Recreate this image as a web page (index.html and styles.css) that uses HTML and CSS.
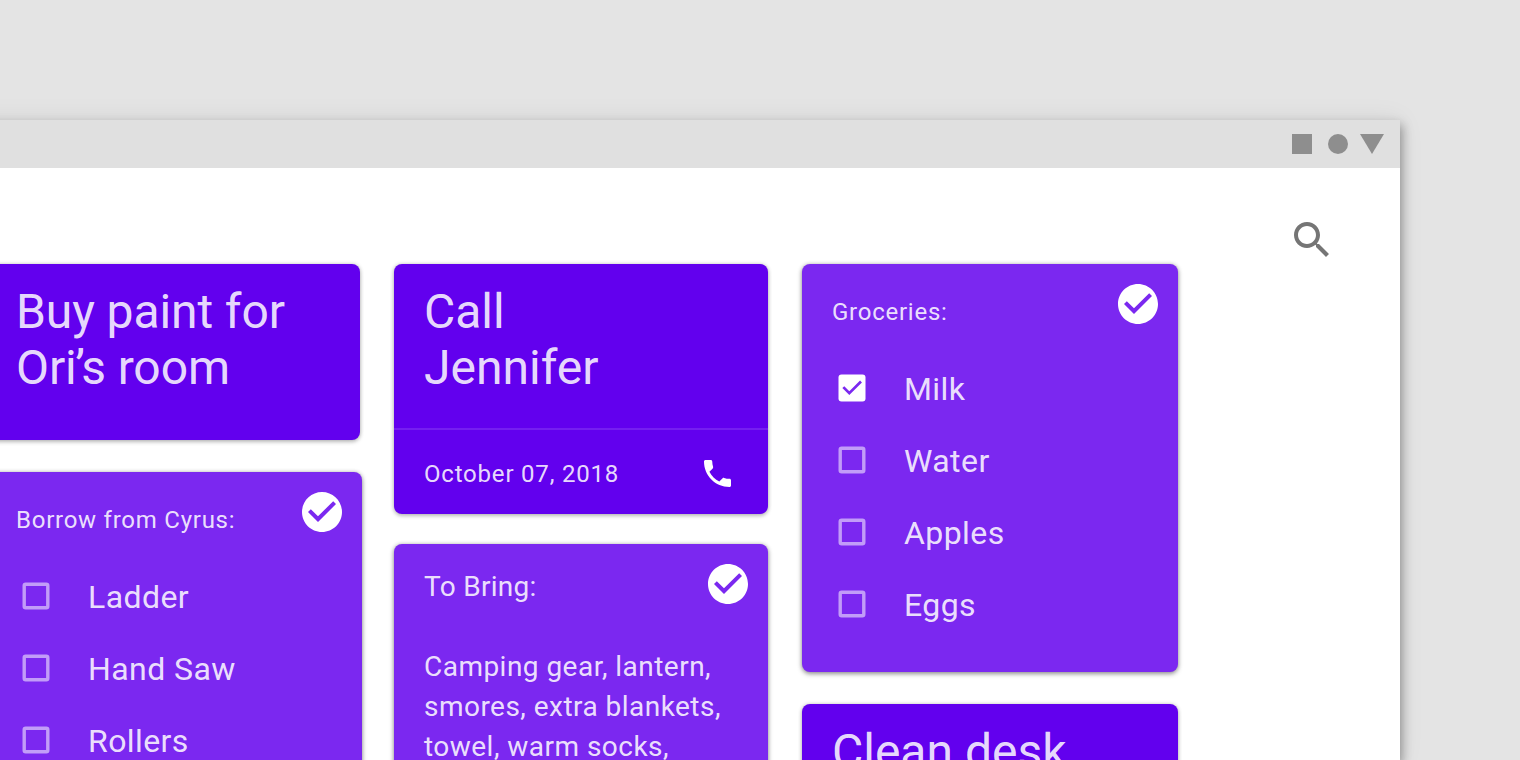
FILE: index.html
```html
<!DOCTYPE html>
<html lang="en">
<head>
<meta charset="utf-8">
<title>Notes</title>
<link rel="stylesheet" href="styles.css">
</head>
<body>
<svg class="symbols" aria-hidden="true">
  <symbol id="check-circle" viewBox="0 0 24 24"><path d="M12 2C6.48 2 2 6.48 2 12s4.48 10 10 10 10-4.480 10-10S17.520 2 12 2zm-2 15l-5-5 1.410-1.410L10 14.170l7.590-7.590L19 8l-9 9z"/></symbol>
  <symbol id="box" viewBox="0 0 36 36"><rect x="6.200" y="6.200" width="23.600" height="23.600" rx="1.500" fill="none" stroke="currentColor" stroke-width="3.400"/></symbol>
  <symbol id="box-checked" viewBox="0 0 36 36"><rect x="4.500" y="4.500" width="27" height="27" rx="3" fill="#fff"/><path d="M9.300 17.100l6 6L27 11.500" fill="none" stroke="#7b28f0" stroke-width="2.700"/></symbol>
</svg>
<div class="window">
  <header class="titlebar">
    <svg class="controls" viewBox="0 0 92 20"><path d="M0 0h20v20H0z"/><circle cx="46" cy="10" r="10"/><path d="M68 0h24L80 20z"/></svg>
  </header>
  <div class="toolbar">
    <svg class="search" viewBox="0 0 24 24"><path d="M15.500 14h-.79l-.28-.27C15.410 12.590 16 11.110 16 9.500 16 5.910 13.090 3 9.500 3S3 5.910 3 9.500 5.910 16 9.500 16c1.610 0 3.090-.59 4.230-1.570l.27.28v.79l5 4.990L20.490 19l-4.990-5zm-6 0C7.010 14 5 11.990 5 9.500S7.010 5 9.500 5 14 7.010 14 9.500 11.990 14 9.500 14z"/></svg>
  </div>
  <main class="board">
    <section class="column column-first">
      <article class="card dark reminder">
        <h2 class="title">Buy paint for<br>Ori<span class="apostrophe">’</span>s room</h2>
      </article>
      <article class="card light wide">
        <svg class="badge"><use href="#check-circle"/></svg>
        <h3 class="label">Borrow from Cyrus:</h3>
        <ul class="list">
          <li><svg class="checkbox"><use href="#box"/></svg><span>Ladder</span></li>
          <li><svg class="checkbox"><use href="#box"/></svg><span>Hand Saw</span></li>
          <li><svg class="checkbox"><use href="#box"/></svg><span>Rollers</span></li>
        </ul>
      </article>
    </section>
    <section class="column column-second">
      <article class="card dark call">
        <h2 class="title">Call<br>Jennifer</h2>
        <footer class="meta">
          <span>October 07, 2018</span>
          <svg class="phone" viewBox="0 0 24 24"><path transform="translate(.333 .333)" d="M6.620 10.790c1.440 2.830 3.760 5.140 6.590 6.590l2.200-2.200c.27-.27.67-.36 1.020-.24 1.120.37 2.330.57 3.570.57.55 0 1 .45 1 1V20c0 .55-.45 1-1 1-9.390 0-17-7.610-17-17 0-.55.45-1 1-1h3.500c.55 0 1 .45 1 1 0 1.250.2 2.450.57 3.570.11.35.03.74-.25 1.020l-2.200 2.200z"/></svg>
        </footer>
      </article>
      <article class="card light note">
        <svg class="badge"><use href="#check-circle"/></svg>
        <h3 class="heading">To Bring:</h3>
        <p class="text">Camping gear, lantern,<br>smores, extra blankets,<br>towel, warm socks,</p>
      </article>
    </section>
    <section class="column column-third">
      <article class="card light groceries">
        <svg class="badge"><use href="#check-circle"/></svg>
        <h3 class="label">Groceries:</h3>
        <ul class="list">
          <li><svg class="checkbox"><use href="#box-checked"/></svg><span>Milk</span></li>
          <li><svg class="checkbox"><use href="#box"/></svg><span>Water</span></li>
          <li><svg class="checkbox"><use href="#box"/></svg><span>Apples</span></li>
          <li><svg class="checkbox"><use href="#box"/></svg><span>Eggs</span></li>
        </ul>
      </article>
      <article class="card dark reminder">
        <h2 class="title">Clean desk</h2>
      </article>
    </section>
  </main>
</div>
</body>
</html>
```
FILE: styles.css
```css
* { box-sizing: border-box; }
html, body { height: 100%; }
body {
  margin: 0;
  padding-top: 120px;
  overflow: hidden;
  background: #e4e4e4;
  font-family: Roboto, "Liberation Sans", sans-serif;
  color: rgba(255, 255, 255, .87);
}
h2, h3, p, ul { margin: 0; padding: 0; font-weight: 400; }
svg { display: block; flex: none; }
.symbols { display: none; }

.window {
  width: 1440px;
  height: 640px;
  margin-left: -40px;
  background: #fff;
  box-shadow: 0 0 24px rgba(0, 0, 0, .08), 2px 5px 10px rgba(0, 0, 0, .35), 0 20px 0 #fff;
}
.titlebar {
  display: flex;
  justify-content: flex-end;
  align-items: center;
  height: 48px;
  padding-right: 16px;
  background: #e0e0e0;
}
.controls { width: 92px; height: 20px; fill: #8e8e8e; }
.toolbar {
  display: flex;
  justify-content: flex-end;
  height: 96px;
  padding: 48px 64px 0 0;
}
.search { width: 48px; height: 48px; fill: #757575; }

.board { display: flex; align-items: flex-start; padding-left: 26px; }
.column { display: flex; flex-direction: column; gap: 32px; }
.column-first { width: 376px; margin-right: 32px; }
.column-second { width: 374px; margin-right: 34px; gap: 30px; }
.column-third { width: 376px; }

.card {
  position: relative;
  padding-left: 30px;
  border-radius: 8px;
  box-shadow: 0 2px 4px rgba(0, 0, 0, .22), 0 0 4px rgba(0, 0, 0, .18);
}
.dark { background: #6200ee; }
.light {
  background: #7b28f0;
  box-shadow: 0 2px 5px rgba(0, 0, 0, .38), 0 0 4px rgba(0, 0, 0, .18);
}
.reminder { height: 176px; padding-top: 20px; }
.column-first .reminder { width: 374px; }
.title { font-size: 48px; line-height: 56px; }
.column-first .title { letter-spacing: -.1px; }
.apostrophe { margin: 0 -3.500px 0 -1.500px; }

.badge {
  position: absolute;
  top: 16px;
  right: 16px;
  width: 48px;
  height: 48px;
  fill: #fff;
}
.wide { height: 408px; padding-top: 32px; }
.groceries { height: 408px; padding-top: 32px; }
.label {
  margin-bottom: 24px;
  font-size: 24px;
  line-height: 32px;
  letter-spacing: .75px;
}
.list { list-style: none; }
.list li {
  display: flex;
  align-items: center;
  gap: 34px;
  height: 72px;
  padding-left: 2px;
  font-size: 32px;
  letter-spacing: .42px;
}
.list span { padding-top: 2px; }
.checkbox { width: 36px; height: 36px; color: rgba(255, 255, 255, .54); }

.call { height: 250px; padding: 20px 0 0; }
.call .title { height: 144px; padding-left: 30px; }
.meta {
  display: flex;
  justify-content: space-between;
  align-items: center;
  height: 86px;
  padding: 2px 33px 0 30px;
  border-top: 2px solid rgba(255, 255, 255, .12);
  font-size: 24px;
  letter-spacing: .8px;
}
.meta span { padding-top: 2px; }
.phone { width: 36px; height: 36px; fill: #fff; }

.note { height: 300px; padding-top: 23px; }
.heading, .text { font-size: 28px; line-height: 40px; letter-spacing: .47px; }
.heading { margin-bottom: 40px; letter-spacing: .3px; }
```
